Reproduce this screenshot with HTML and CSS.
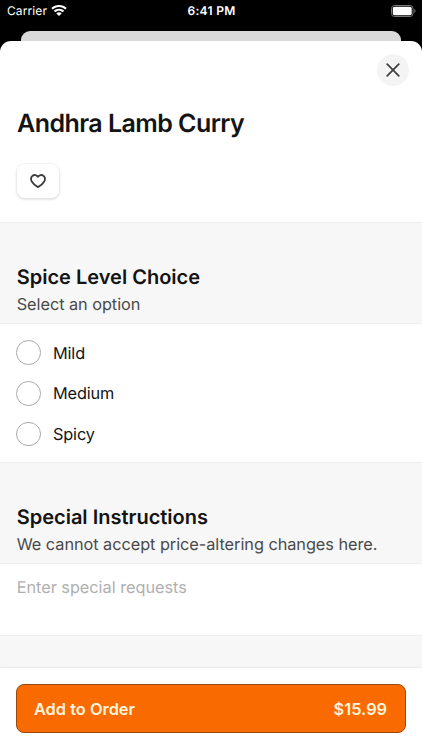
FILE: index.html
```
<!DOCTYPE html>
<html lang="en">
<head>
<meta charset="utf-8">
<meta name="viewport" content="width=device-width, initial-scale=1">
<title>Andhra Lamb Curry</title>
<link rel="stylesheet" href="styles.css">
</head>
<body>
<header class="status">
  <div class="carrier"><span>Carrier</span>
    <svg width="16" height="12" viewBox="0 0 16 12" fill="#fff"><path d="M8 0C4.900 0 2.200 1.200.3 3.100L1.800 4.600C3.400 3 5.600 2.100 8 2.100s4.600.9 6.200 2.500l1.500-1.500C13.800 1.200 11.100 0 8 0Z"/><path d="M8 3.700c-2 0-3.900.8-5.200 2.100l1.500 1.500C5.300 6.400 6.600 5.800 8 5.800s2.700.6 3.700 1.500l1.500-1.500C11.900 4.500 10 3.700 8 3.700Z"/><path d="M8 7.300c-1.100 0-2 .4-2.700 1.100L8 11.100l2.700-2.700C10 7.700 9.100 7.300 8 7.300Z"/></svg>
  </div>
  <div class="time">6:41 PM</div>
  <div class="battery"><svg width="25" height="12" viewBox="0 0 25 12"><rect x=".5" y=".5" width="21.500" height="11" rx="3" fill="none" stroke="#777"/><rect x="1.800" y="1.800" width="18.900" height="8.400" rx="1.600" fill="#fff"/><path d="M23.300 4v4c.8-.4 1.200-1.100 1.200-2s-.4-1.600-1.200-2Z" fill="#777"/></svg></div>
</header>
<div class="behind"></div>
<main class="sheet">
  <section class="hero">
    <button class="close" aria-label="Close"><svg width="14" height="14" viewBox="0 0 14 14"><path d="M1.200 1.200 12.800 12.800M12.800 1.200 1.200 12.800" stroke="#3d3d3d" stroke-width="1.700" stroke-linecap="round"/></svg></button>
    <h1>Andhra Lamb Curry</h1>
    <button class="favorite" aria-label="Favorite"><svg width="16" height="15" viewBox="0 0 16 15"><path d="M8 2.800C6.700.8 4.200.5 2.600 1.800.8 3.300.8 5.700 1.800 7.500 3 9.600 6.300 12.200 8 13.100c1.700-.9 5-3.500 6.200-5.600 1-1.800 1-4.200-.8-5.700C11.800.5 9.300.8 8 2.800Z" fill="none" stroke="#3d3d3d" stroke-width="1.800" stroke-linejoin="round"/></svg></button>
  </section>
  <section class="heading">
    <h2>Spice Level Choice</h2>
    <p>Select an option</p>
  </section>
  <div class="options">
    <label class="option"><span class="radio"></span><span>Mild</span></label>
    <label class="option"><span class="radio"></span><span>Medium</span></label>
    <label class="option"><span class="radio"></span><span>Spicy</span></label>
  </div>
  <section class="heading">
    <h2>Special Instructions</h2>
    <p>We cannot accept price-altering changes here.</p>
  </section>
  <div class="request">Enter special requests</div>
  <div class="spacer"></div>
  <footer class="footer">
    <button class="order"><span>Add to Order</span><span>$15.99</span></button>
  </footer>
</main>
</body>
</html>
```
FILE: styles.css
```
* { box-sizing: border-box; }
body {
  margin: 0;
  width: 422px;
  height: 750px;
  overflow: hidden;
  display: flex;
  flex-direction: column;
  background: #000;
  color: #141414;
  font-family: Inter, sans-serif;
  text-rendering: geometricPrecision;
}
h1, h2, p { margin: 0; font-weight: 600; }
button { font: inherit; margin: 0; padding: 0; }
svg { display: block; }
.status {
  flex: none;
  display: grid;
  grid-template-columns: 1fr auto 1fr;
  align-items: center;
  height: 31px;
  padding: 0 6px 10px 7px;
  color: #fff;
  font-size: 12px;
}
.carrier { display: flex; align-items: center; gap: 4px; letter-spacing: .1px; }
.time { font-weight: 600; letter-spacing: .3px; }
.battery { justify-self: end; }
.behind {
  flex: none;
  height: 10px;
  margin: 0 21px;
  border-radius: 9px 9px 0 0;
  background: #dadada;
}
.sheet {
  flex: 1;
  display: flex;
  flex-direction: column;
  border-radius: 11px 11px 0 0;
  overflow: hidden;
  background: #fff;
}
.hero {
  flex: none;
  height: 181px;
  padding: 12.5px 13px 0 17px;
  display: flex;
  flex-direction: column;
  align-items: flex-start;
}
.close {
  align-self: flex-end;
  display: grid;
  place-items: center;
  width: 32px;
  height: 32px;
  border: 0;
  border-radius: 50%;
  background: #f4f4f4;
}
h1 {
  margin-top: 22.5px;
  font-size: 25px;
  line-height: 32px;
  letter-spacing: -.55px;
  white-space: nowrap;
}
.favorite {
  display: grid;
  place-items: center;
  width: 42px;
  height: 34px;
  margin-top: 24px;
  border: 0;
  border-radius: 8px;
  background: #fff;
  box-shadow: 0 0 0 .5px #eee, 0 1px 3px rgba(0, 0, 0, .22);
}
.heading {
  flex: none;
  height: 102px;
  padding: 40px 16.7px 0;
  background: #f7f7f7;
  border-top: 1px solid #eee;
  border-bottom: 1px solid #eee;
}
h2 { font-size: 20px; line-height: 28px; white-space: nowrap; }
.heading p {
  font-size: 16.300px;
  line-height: 24px;
  font-weight: 400;
  letter-spacing: -.04px;
  color: #4a4a4a;
  margin-top: 1px;
  white-space: nowrap;
}
.options {
  flex: none;
  height: 138px;
  padding: 16.4px 16.4px 0;
  display: flex;
  flex-direction: column;
  gap: 16px;
}
.option {
  display: flex;
  align-items: center;
  gap: 12px;
  height: 24.700px;
  font-size: 16.300px;
  letter-spacing: -.14px;
}
.radio { width: 24.600px; height: 24.600px; border: 1px solid #aaa; border-radius: 50%; }
.request {
  flex: none;
  height: 71px;
  padding: 11px 16.7px;
  font-size: 16.300px;
  line-height: 24px;
  letter-spacing: -.02px;
  color: #b0b0b0;
}
.spacer { flex: none; height: 33px; background: #f7f7f7; border-top: 1px solid #eee; }
.footer {
  flex: 1;
  padding: 16px 16.4px 0;
  background: #fff;
  box-shadow: 0 0 3px rgba(0, 0, 0, .1);
}
.order {
  display: flex;
  align-items: center;
  justify-content: space-between;
  width: 100%;
  height: 49px;
  padding: 0 17.5px 0 16.500px;
  border: 1px solid #9b480f;
  border-radius: 8px;
  background: #f96b00;
  color: #fff3dc;
  font-size: 16.400px;
  font-weight: 600;
}
```
